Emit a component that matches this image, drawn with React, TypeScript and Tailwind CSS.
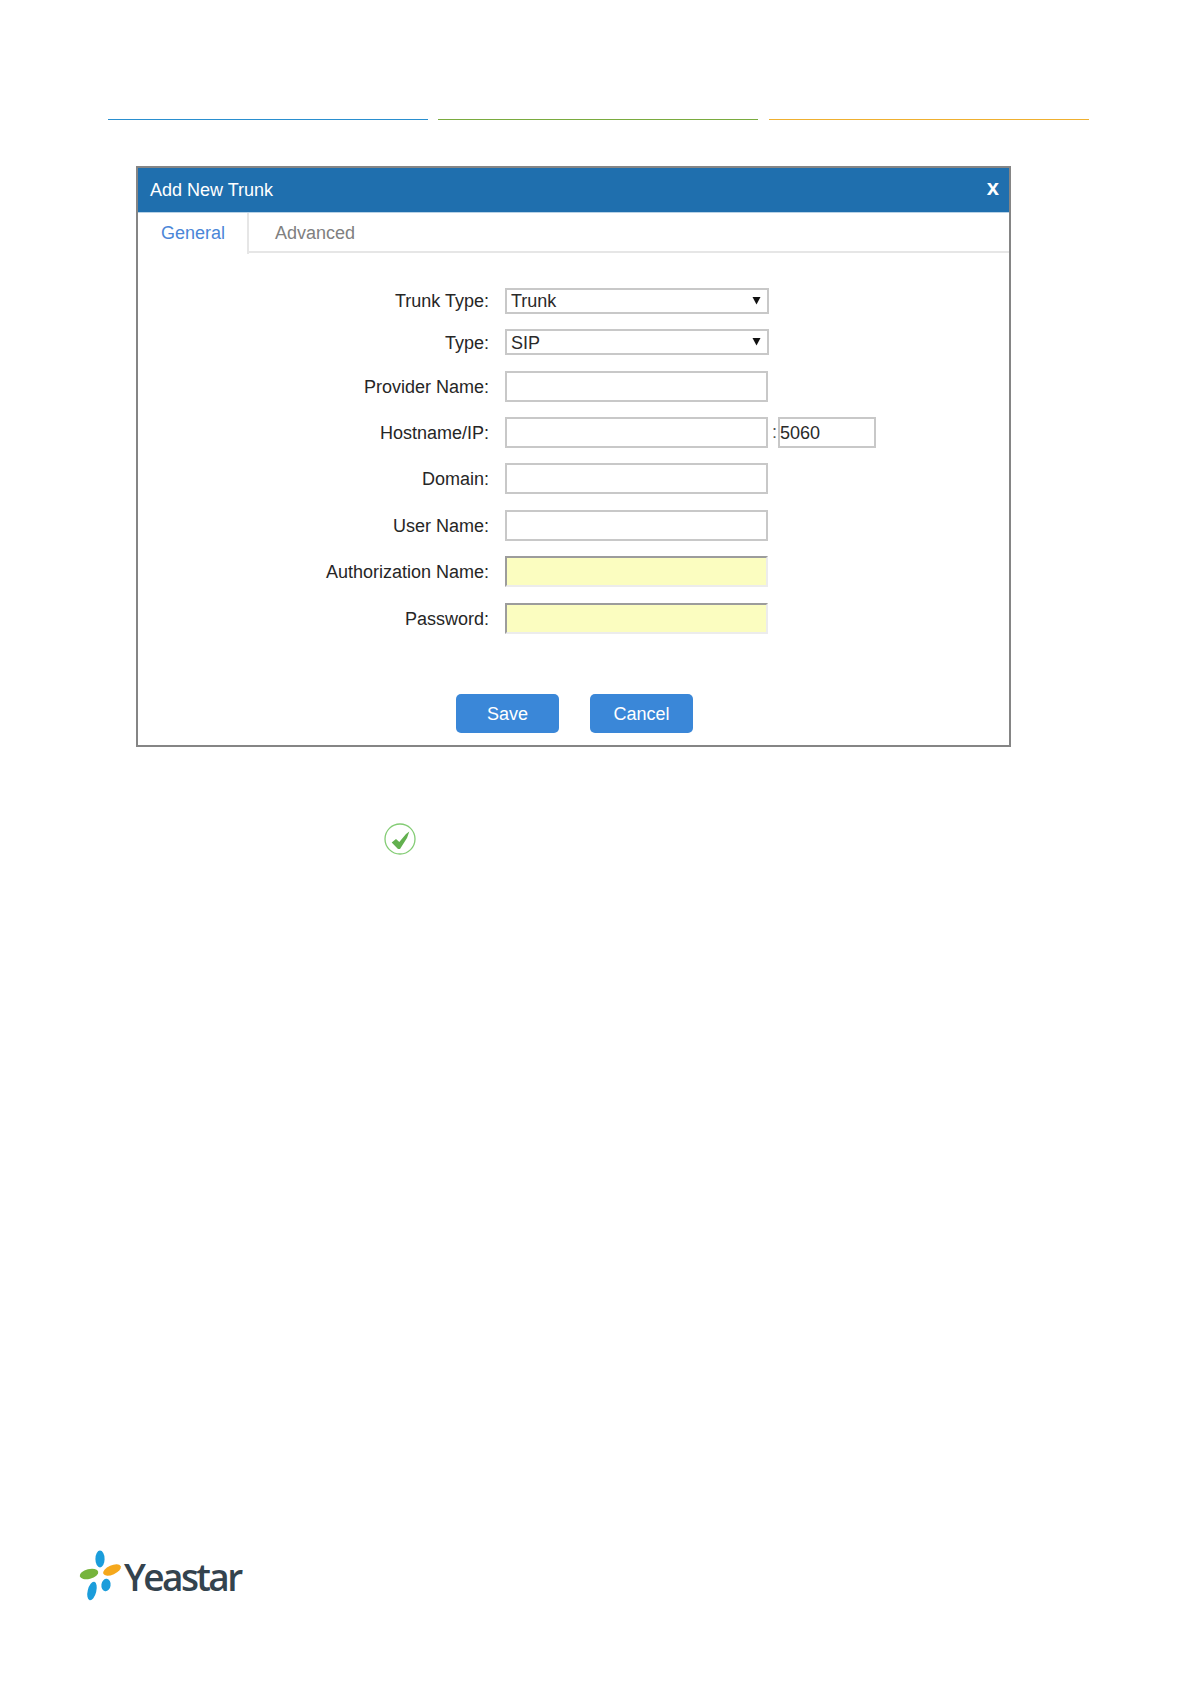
const font = { fontFamily: '"Liberation Sans", Arial, sans-serif' };

function Arrow() {
  return (
    <svg width="9" height="9" viewBox="0 0 9 9" className="mr-[6px] -mt-0.5">
      <path d="M0.5 1H8.5L4.5 8.5Z" fill="#111" />
    </svg>
  );
}

function Label({ children, shift }: { children: string; shift?: boolean }) {
  return (
    <label className={shift ? "w-[351px] shrink-0 pt-0.5 text-right text-[18px] leading-none text-[#262626]" : "w-[351px] shrink-0 text-right text-[18px] leading-none text-[#262626]"}>
      {children}
    </label>
  );
}

function SelectRow({ label, value, shift }: { label: string; value: string; shift?: boolean }) {
  return (
    <div className="flex h-[26px] items-center gap-4">
      <Label shift={shift}>{label}</Label>
      <div className="flex h-[26px] w-[264px] items-center justify-between border-2 border-[#c8c8c8] pl-1 text-[18px] text-[#2a2a2a]">
        <span className={shift ? "pt-0.5" : ""}>{value}</span>
        <Arrow />
      </div>
    </div>
  );
}

function InputRow({ label, required, extra }: { label: string; required?: boolean; extra?: boolean }) {
  const cls = required
    ? "h-[31px] w-[263px] border-2 border-t-[#9c9c9c] border-l-[#9c9c9c] border-r-[#ececec] border-b-[#ececec] bg-[#fbfdc0] outline-none"
    : "h-[31px] w-[263px] border-2 border-[#c8c8c8] bg-white outline-none";
  return (
    <div className="flex h-[31px] items-center gap-4">
      <Label>{label}</Label>
      <input readOnly className={cls} aria-label={label} />
      {extra && (
        <div className="-ml-[13px] flex items-center text-[18px] text-[#555]">
          <span className="w-[6px] pl-px">:</span>
          <input
            readOnly
            defaultValue="5060"
            aria-label="Port"
            className="ml-px h-[31px] w-[98px] border-2 border-[#c8c8c8] bg-white pt-0.5 text-[18px] text-[#2a2a2a] outline-none"
          />
        </div>
      )}
    </div>
  );
}

function Logo() {
  return (
    <div className="ml-[78px] flex h-[52px] items-center">
      <svg width="46" height="52" viewBox="0 0 46 52" className="shrink-0">
        <ellipse cx="22" cy="9" rx="4.6" ry="8.5" fill="#1b9ddb" />
        <ellipse cx="11" cy="24" rx="9.5" ry="4.8" transform="rotate(-14 11 24)" fill="#76b43c" />
        <ellipse cx="34" cy="20" rx="9.5" ry="4.6" transform="rotate(-24 34 20)" fill="#f5a81c" />
        <ellipse cx="14" cy="41" rx="4.3" ry="9.5" transform="rotate(14 14 41)" fill="#1b9ddb" />
        <ellipse cx="28" cy="35" rx="4.6" ry="6.2" transform="rotate(8 28 35)" fill="#1b9ddb" />
      </svg>
      <span
        className="text-[37px] font-semibold leading-none tracking-[-2.6px] text-[#33434e]"
        style={{ fontFamily: '"Open Sans", sans-serif' }}
      >
        Yeastar
      </span>
    </div>
  );
}

export default function App() {
  return (
    <div className="h-[1684px] w-full overflow-hidden bg-white pt-[119px]" style={font}>
      <div className="ml-[108px] flex w-[981px]">
        <div className="h-px w-[320px] bg-[#2a8fcf]" />
        <div className="ml-[10px] h-px w-[320px] bg-[#7aab3f]" />
        <div className="ml-[11px] h-px w-[320px] bg-[#efb030]" />
      </div>

      <div className="ml-[136px] mt-[46px] h-[581px] w-[875px] border-2 border-[#858585]">
        <div className="flex h-[44px] items-center justify-between bg-[#1f6fae] pl-3 pr-[10px] text-white">
          <span className="text-[18px]">Add New Trunk</span>
          <span className="-mt-[5px] text-[22px] font-bold leading-none">x</span>
        </div>
        <div className="h-px bg-[#b8d2e6]" />
        <div className="flex h-[40px] border-b-2 border-[#e6e6e6]">
          <div className="-mb-[2px] flex h-[41px] w-[111px] items-center justify-center border-r-2 border-[#e6e6e6] bg-white pl-px text-[18px] text-[#4a86d8]">
            General
          </div>
          <div className="flex items-center pl-[26px] pt-0.5 text-[18px] text-[#808080]">Advanced</div>
        </div>

        <div className="flex flex-col gap-[15px] pt-[35px]">
          <SelectRow label="Trunk Type:" value="Trunk" />
          <SelectRow label="Type:" value="SIP" shift />
          <div className="mt-px">
            <InputRow label="Provider Name:" />
          </div>
          <InputRow label="Hostname/IP:" extra />
          <InputRow label="Domain:" />
          <div className="mt-px">
            <InputRow label="User Name:" />
          </div>
          <InputRow label="Authorization Name:" required />
          <div className="mt-px">
            <InputRow label="Password:" required />
          </div>
        </div>

        <div className="ml-[318px] mt-[60px] flex gap-[31px]">
          <button className="h-[39px] w-[103px] rounded-[5px] bg-[#3a87d8] pt-px text-[18px] text-white">Save</button>
          <button className="h-[39px] w-[103px] rounded-[5px] bg-[#3a87d8] pt-px text-[18px] text-white">Cancel</button>
        </div>
      </div>

      <div className="ml-[384px] mt-[76px] h-[32px]">
        <svg width="32" height="32" viewBox="0 0 32 32" className="block">
          <circle cx="16" cy="16" r="15" fill="none" stroke="#83cc74" strokeWidth="1.3" />
          <path d="M7.7 19.5L12 16L15.3 19L22 11L25.3 8.4L23 15L16 26L14 26Z" fill="#62b04f" />
        </svg>
      </div>

      <div className="mt-[695px]">
        <Logo />
      </div>
    </div>
  );
}
